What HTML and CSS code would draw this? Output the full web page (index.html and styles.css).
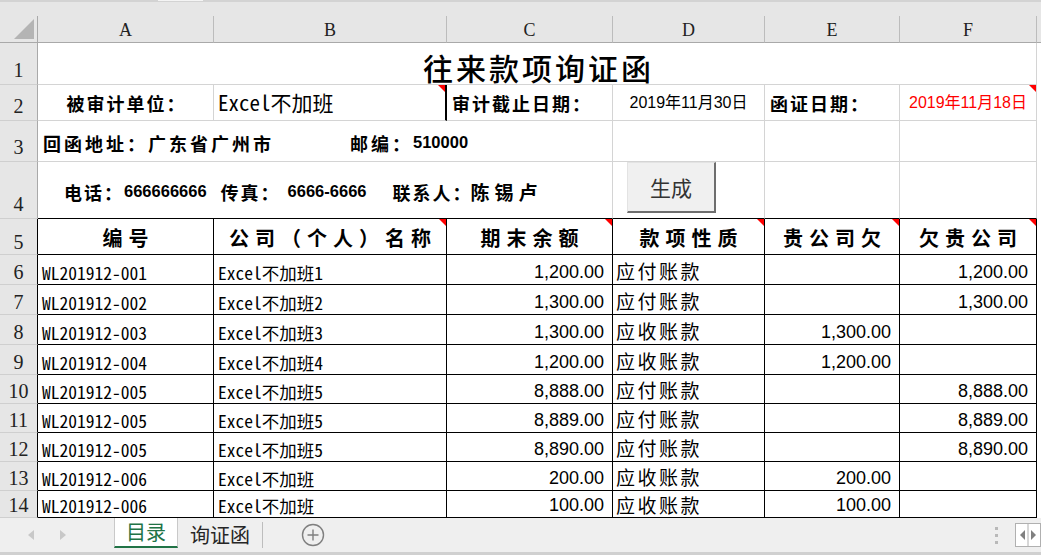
FILE: index.html
```html
<!DOCTYPE html>
<html lang="zh-CN">
<head>
<meta charset="utf-8">
<title>往来款项询证函</title>
<link rel="stylesheet" href="styles.css">
</head>
<body>
<div class="strip"><span class="strip-hl"></span></div>
<div class="sheet">
  <div class="c corner"><svg width="20" height="20" viewBox="0 0 20 20"><path d="M20 0V20H0Z" fill="#b4b4b4"/></svg></div>
  <div class="c ch">A</div>
  <div class="c ch">B</div>
  <div class="c ch">C</div>
  <div class="c ch">D</div>
  <div class="c ch">E</div>
  <div class="c ch">F</div>
  <div class="c chf"></div>

  <div class="c rh">1</div>
  <div class="c title span6">往来款项询证函</div>
  <div class="c fill"></div>

  <div class="c rh">2</div>
  <div class="c lbl center">被审计单位：</div>
  <div class="c mono unit tri thick">Excel不加班</div>
  <div class="c lbl">审计截止日期：</div>
  <div class="c date">2019年11月30日</div>
  <div class="c lbl">函证日期：</div>
  <div class="c date red tri">2019年11月18日</div>
  <div class="c fill"></div>

  <div class="c rh">3</div>
  <div class="c span3 info addr"><span class="cj">回函地址：广东省广州市</span><span class="cj gap-zip">邮编：</span><span class="dg">510000</span></div>
  <div class="c"></div>
  <div class="c"></div>
  <div class="c"></div>
  <div class="c fill"></div>

  <div class="c rh">4</div>
  <div class="c span3 info contact kb"><span class="cj">电话：</span><span class="dg">666666666</span><span class="cj g1">传真：</span><span class="dg g2">6666-6666</span><span class="cj g3">联系人：</span><span class="cj wide">陈锡卢</span></div>
  <div class="c kb"><button class="btn" type="button">生成</button></div>
  <div class="c kb"></div>
  <div class="c kb"></div>
  <div class="c fill"></div>

  <div class="c rh k">5</div>
  <div class="c t hd">编号</div>
  <div class="c t hd tri">公司（个人）名称</div>
  <div class="c t hd tri">期末余额</div>
  <div class="c t hd tri">款项性质</div>
  <div class="c t hd tri">贵公司欠</div>
  <div class="c t hd tri">欠贵公司</div>
  <div class="c fill"></div>

  <div class="c rh k">6</div>
  <div class="c t mono id">WL201912-001</div>
  <div class="c t mono id">Excel不加班1</div>
  <div class="c t num">1,200.00</div>
  <div class="c t typ">应付账款</div>
  <div class="c t num"></div>
  <div class="c t num">1,200.00</div>
  <div class="c fill"></div>

  <div class="c rh k">7</div>
  <div class="c t mono id">WL201912-002</div>
  <div class="c t mono id">Excel不加班2</div>
  <div class="c t num">1,300.00</div>
  <div class="c t typ">应付账款</div>
  <div class="c t num"></div>
  <div class="c t num">1,300.00</div>
  <div class="c fill"></div>

  <div class="c rh k">8</div>
  <div class="c t mono id">WL201912-003</div>
  <div class="c t mono id">Excel不加班3</div>
  <div class="c t num">1,300.00</div>
  <div class="c t typ">应收账款</div>
  <div class="c t num">1,300.00</div>
  <div class="c t num"></div>
  <div class="c fill"></div>

  <div class="c rh k">9</div>
  <div class="c t mono id">WL201912-004</div>
  <div class="c t mono id">Excel不加班4</div>
  <div class="c t num">1,200.00</div>
  <div class="c t typ">应收账款</div>
  <div class="c t num">1,200.00</div>
  <div class="c t num"></div>
  <div class="c fill"></div>

  <div class="c rh k">10</div>
  <div class="c t mono id">WL201912-005</div>
  <div class="c t mono id">Excel不加班5</div>
  <div class="c t num">8,888.00</div>
  <div class="c t typ">应付账款</div>
  <div class="c t num"></div>
  <div class="c t num">8,888.00</div>
  <div class="c fill"></div>

  <div class="c rh k">11</div>
  <div class="c t mono id">WL201912-005</div>
  <div class="c t mono id">Excel不加班5</div>
  <div class="c t num">8,889.00</div>
  <div class="c t typ">应付账款</div>
  <div class="c t num"></div>
  <div class="c t num">8,889.00</div>
  <div class="c fill"></div>

  <div class="c rh k">12</div>
  <div class="c t mono id">WL201912-005</div>
  <div class="c t mono id">Excel不加班5</div>
  <div class="c t num">8,890.00</div>
  <div class="c t typ">应付账款</div>
  <div class="c t num"></div>
  <div class="c t num">8,890.00</div>
  <div class="c fill"></div>

  <div class="c rh k">13</div>
  <div class="c t mono id">WL201912-006</div>
  <div class="c t mono id">Excel不加班</div>
  <div class="c t num">200.00</div>
  <div class="c t typ">应收账款</div>
  <div class="c t num">200.00</div>
  <div class="c t num"></div>
  <div class="c fill"></div>

  <div class="c rh k">14</div>
  <div class="c t mono id">WL201912-006</div>
  <div class="c t mono id">Excel不加班</div>
  <div class="c t num">100.00</div>
  <div class="c t typ">应收账款</div>
  <div class="c t num">100.00</div>
  <div class="c t num"></div>
  <div class="c fill"></div>
</div>

<div class="tabs">
  <div class="nav">
    <svg width="8" height="12" viewBox="0 0 8 12"><path d="M7 1V11L1 6Z" fill="#c8c8c8"/></svg>
    <svg width="8" height="12" viewBox="0 0 8 12"><path d="M1 1V11L7 6Z" fill="#c8c8c8"/></svg>
  </div>
  <div class="tab active">目录</div>
  <div class="tab">询证函</div>
  <div class="sep"></div>
  <div class="add"><svg width="24" height="24" viewBox="0 0 24 24"><circle cx="12" cy="12" r="10.5" fill="none" stroke="#7f7f7f" stroke-width="1.4"/><path d="M12 6.5V17.5M6.5 12H17.5" stroke="#7f7f7f" stroke-width="1.4"/></svg></div>
  <div class="right">
    <div class="dots"><i></i><i></i><i></i></div>
    <div class="scroll">
      <svg width="26" height="24" viewBox="0 0 26 24"><rect x="0.5" y="0.5" width="25" height="23" fill="#fff" stroke="#b0b0b0"/><path d="M13 1V23" stroke="#b0b0b0"/><path d="M10 7V17L5 12Z" fill="#808080"/><path d="M16 7V17L21 12Z" fill="#808080"/></svg>
    </div>
  </div>
</div>
</body>
</html>
```

FILE: styles.css
```css
html, body {
  margin: 0;
  padding: 0;
}
body {
  width: 1041px;
  height: 555px;
  overflow: hidden;
  background: #fff;
  font-family: "Noto Sans CJK SC", sans-serif;
  color: #000;
}

.strip {
  height: 16px;
  box-sizing: border-box;
  background: #e6e6e6;
  border-top: 2px solid #d3d3d3;
  display: flex;
}
.strip-hl {
  margin-left: 158px;
  width: 45px;
  height: 1px;
  margin-top: -2px;
  background: #f4f4f4;
}

.sheet {
  display: grid;
  grid-template-columns: 38px 176px 233px 166px 152px 135px 137px 4px;
  grid-template-rows: 27px 42px 36px 41px 57px 36px repeat(4, 30px) repeat(4, 29px) 27px;
  height: 502px;
  overflow: hidden;
}

.c {
  box-sizing: border-box;
  border-right: 1px solid #d4d4d4;
  border-bottom: 1px solid #d4d4d4;
  position: relative;
  display: flex;
  align-items: center;
  min-width: 0;
  white-space: nowrap;
  line-height: 1;
}

.corner {
  background: #e6e6e6;
  border-right-color: #a9a9a9;
  border-bottom-color: #a9a9a9;
  justify-content: flex-end;
  align-items: flex-end;
  padding: 0 3px 3px 0;
}
.ch {
  background: #e6e6e6;
  border-right-color: #bcbcbc;
  border-bottom-color: #a9a9a9;
  justify-content: center;
  font-family: "Liberation Serif", serif;
  font-size: 18px;
  color: #222;
  padding-top: 2px;
}
.chf {
  background: #e6e6e6;
  border-right: none;
  border-bottom-color: #a9a9a9;
}
.rh {
  background: #e6e6e6;
  border-right-color: #a9a9a9;
  border-bottom-color: #cfcfcf;
  justify-content: center;
  align-items: flex-end;
  padding-bottom: 4px;
  font-family: "Liberation Serif", serif;
  font-size: 20px;
  color: #222;
}
.rh.k {
  border-right-color: #000;
  padding-bottom: 2px;
}
.fill {
  border: none;
  background: #fff;
}

.span6 { grid-column: span 6; }
.span3 { grid-column: span 3; }

.title {
  justify-content: center;
  font-size: 30px;
  font-weight: 500;
  letter-spacing: 3px;
  padding-left: 3px;
  padding-top: 6px;
}

.lbl {
  font-size: 18px;
  font-weight: 700;
  letter-spacing: 2px;
  padding-left: 5px;
}
.lbl.center {
  justify-content: center;
  padding-left: 2px;
}
.mono {
  font-family: "Noto Sans Mono CJK SC", "Liberation Mono", "Noto Sans CJK SC", monospace;
}
.unit {
  font-size: 21px;
  padding-left: 4px;
}
.thick {
  border-right: 2px solid #000;
}
.date {
  justify-content: center;
  font-family: "Liberation Sans", "Noto Sans CJK SC", sans-serif;
  font-size: 16px;
}
.red { color: #f00; }

.tri::after {
  content: "";
  position: absolute;
  top: 0;
  right: 0;
  border-left: 7px solid transparent;
  border-top: 7px solid #f00;
}

.info {
  font-size: 18px;
  font-weight: 700;
}
.info .cj { letter-spacing: 3px; }
.info .dg {
  font-family: "Liberation Sans", Arial, sans-serif;
  font-size: 16.5px;
  font-weight: 700;
}
.addr { padding-left: 5px; padding-top: 3px; }
.gap-zip { margin-left: 76px; }
.contact { padding-left: 26px; padding-top: 3px; }
.contact .cj { letter-spacing: 2px; }
.contact .g1 { margin-left: 14px; }
.contact .g2 { margin-left: 7px; }
.contact .g3 { margin-left: 26px; }
.contact .wide { letter-spacing: 5px; margin-left: -2px; font-size: 19px; }

.btn {
  position: absolute;
  left: 14px;
  top: 0;
  width: 89px;
  height: 51px;
  box-sizing: border-box;
  background: #f0f0f0;
  border-style: solid;
  border-width: 1px 2px 2px 1px;
  border-color: #e3e3e3 #6e6e6e #6e6e6e #e3e3e3;
  font-family: "Noto Sans CJK SC", sans-serif;
  font-size: 21px;
  color: #333;
  padding: 0;
}

.kb { border-bottom-color: #000; }
.t {
  border-right-color: #000;
  border-bottom-color: #000;
}

.hd {
  justify-content: center;
  font-size: 20px;
  font-weight: 700;
  letter-spacing: 6px;
  padding-left: 6px;
  padding-top: 2px;
}

.id {
  font-size: 17.5px;
  padding-left: 4px;
  align-items: flex-end;
  padding-bottom: 3px;
}
.num {
  font-family: "Liberation Sans", Arial, sans-serif;
  font-size: 18px;
  justify-content: flex-end;
  align-items: flex-end;
  padding-right: 8px;
  padding-bottom: 3px;
}
.typ {
  font-size: 19px;
  letter-spacing: 2.5px;
  padding-left: 3px;
  padding-top: 1px;
}

.tabs {
  height: 37px;
  box-sizing: border-box;
  background: #efefef;
  border-bottom: 3px solid #d0d0d0;
  display: flex;
  align-items: stretch;
}
.nav {
  width: 114px;
  display: flex;
  align-items: center;
  padding-left: 27px;
  box-sizing: border-box;
  gap: 24px;
}
.tab {
  display: flex;
  align-items: center;
  justify-content: center;
  font-size: 20px;
  color: #262626;
  height: 30px;
  box-sizing: border-box;
}
.tab.active {
  width: 64px;
  background: #fff;
  color: #217346;
  border-left: 1px solid #c9c9c9;
  border-right: 1px solid #c9c9c9;
  border-bottom: 2px solid #217346;
  padding-bottom: 1px;
}
.tab:not(.active) {
  width: 84px;
  padding-top: 2px;
}
.sep {
  width: 1px;
  background: #bdbdbd;
  margin: 4px 0 4px 0;
}
.add {
  display: flex;
  align-items: center;
  margin-left: 38px;
}
.right {
  margin-left: auto;
  display: flex;
  align-items: center;
}
.dots {
  display: flex;
  flex-direction: column;
  gap: 4px;
  margin-right: 17px;
}
.dots i {
  display: block;
  width: 3px;
  height: 3px;
  background: #b9b9b9;
}
.scroll {
  display: flex;
  align-items: center;
}
.scroll svg { display: block; }
```
